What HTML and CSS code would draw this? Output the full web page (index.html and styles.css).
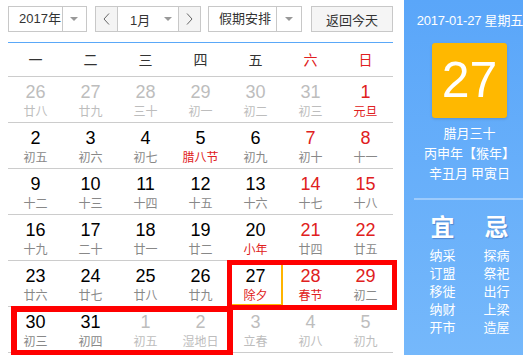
FILE: index.html
```html
<!DOCTYPE html>
<html lang="zh-CN">
<head>
  <meta charset="UTF-8">
  <title>万年历</title>
  <link rel="stylesheet" href="styles.css">
</head>
<body>
  <div class="page">
    <div class="main">
      <div class="toolbar">
        <div class="select select-year">
          <span class="select-text">2017年</span>
          <span class="select-arrow"><i class="caret"></i></span>
        </div>
        <div class="month-group">
          <span class="month-btn">
            <svg width="7" height="12" viewBox="0 0 7 12"><polyline points="6,0.5 1,6 6,11.5" fill="none" stroke="#666" stroke-width="1"/></svg>
          </span>
          <span class="month-select"><span class="month-text">1月</span><i class="caret"></i></span>
          <span class="month-btn">
            <svg width="7" height="12" viewBox="0 0 7 12"><polyline points="1,0.5 6,6 1,11.5" fill="none" stroke="#666" stroke-width="1"/></svg>
          </span>
        </div>
        <div class="select select-holiday">
          <span class="select-text">假期安排</span>
          <span class="select-arrow"><i class="caret"></i></span>
        </div>
        <button class="today-btn">返回今天</button>
      </div>

      <div class="weekdays">
        <span>一</span><span>二</span><span>三</span><span>四</span><span>五</span>
        <span class="red">六</span><span class="red">日</span>
      </div>

      <div class="days">
        <div class="day other"><b>26</b><em>廿八</em></div>
        <div class="day other"><b>27</b><em>廿九</em></div>
        <div class="day other"><b>28</b><em>三十</em></div>
        <div class="day other"><b>29</b><em>初一</em></div>
        <div class="day other"><b>30</b><em>初二</em></div>
        <div class="day other"><b>31</b><em>初三</em></div>
        <div class="day weekend"><b>1</b><em class="festival">元旦</em></div>

        <div class="day"><b>2</b><em>初五</em></div>
        <div class="day"><b>3</b><em>初六</em></div>
        <div class="day"><b>4</b><em>初七</em></div>
        <div class="day"><b>5</b><em class="festival">腊八节</em></div>
        <div class="day"><b>6</b><em>初九</em></div>
        <div class="day weekend"><b>7</b><em>初十</em></div>
        <div class="day weekend"><b>8</b><em>十一</em></div>

        <div class="day"><b>9</b><em>十二</em></div>
        <div class="day"><b>10</b><em>十三</em></div>
        <div class="day"><b>11</b><em>十四</em></div>
        <div class="day"><b>12</b><em>十五</em></div>
        <div class="day"><b>13</b><em>十六</em></div>
        <div class="day weekend"><b>14</b><em>十七</em></div>
        <div class="day weekend"><b>15</b><em>十八</em></div>

        <div class="day"><b>16</b><em>十九</em></div>
        <div class="day"><b>17</b><em>二十</em></div>
        <div class="day"><b>18</b><em>廿一</em></div>
        <div class="day"><b>19</b><em>廿二</em></div>
        <div class="day"><b>20</b><em class="festival">小年</em></div>
        <div class="day weekend"><b>21</b><em>廿四</em></div>
        <div class="day weekend"><b>22</b><em>廿五</em></div>

        <div class="day"><b>23</b><em>廿六</em></div>
        <div class="day"><b>24</b><em>廿七</em></div>
        <div class="day"><b>25</b><em>廿八</em></div>
        <div class="day"><b>26</b><em>廿九</em></div>
        <div class="day selected"><b>27</b><em class="festival">除夕</em></div>
        <div class="day weekend"><b>28</b><em class="festival">春节</em></div>
        <div class="day weekend"><b>29</b><em>初二</em></div>

        <div class="day"><b>30</b><em>初三</em></div>
        <div class="day"><b>31</b><em>初四</em></div>
        <div class="day other"><b>1</b><em>初五</em></div>
        <div class="day other"><b>2</b><em>湿地日</em></div>
        <div class="day other"><b>3</b><em>立春</em></div>
        <div class="day other"><b>4</b><em>初八</em></div>
        <div class="day other"><b>5</b><em>初九</em></div>
      </div>
    </div>

    <div class="side">
      <div class="side-inner">
        <div class="side-date">2017-01-27 星期五</div>
        <div class="big-day">27</div>
        <div class="lunar-info">
          <div>腊月三十</div>
          <div>丙申年【猴年】</div>
          <div>辛丑月 甲寅日</div>
        </div>
        <div class="side-line"></div>
        <div class="almanac">
          <div class="almanac-col">
            <div class="almanac-title">宜</div>
            <div>纳采</div><div>订盟</div><div>移徙</div><div>纳财</div><div>开市</div>
          </div>
          <div class="almanac-col">
            <div class="almanac-title">忌</div>
            <div>探病</div><div>祭祀</div><div>出行</div><div>上梁</div><div>造屋</div>
          </div>
        </div>
      </div>
    </div>

    <!-- red marks drawn over the calendar -->
    <div class="mark mark-week"></div>
    <div class="mark mark-next"></div>
  </div>
</body>
</html>
```

FILE: styles.css
```css
html, body {
  margin: 0;
  padding: 0;
  overflow: hidden;
}

body {
  font-family: "Liberation Sans", "Noto Sans CJK SC", sans-serif;
  background: #ffffff;
  color: #333;
}

.page {
  position: relative;
  display: flex;
  height: 355px;
  width: 523px;
}

.main {
  width: 385px;
  margin-left: 8px;
}

.toolbar {
  display: flex;
  align-items: flex-start;
  padding: 6px 0 10px;
  border-bottom: 1px solid #5aa8f8;
  font-size: 13px;
}

.select {
  display: flex;
  height: 24px;
  border: 1px solid #c8c8c8;
  background: #fff;
}

.select-text {
  line-height: 24px;
  padding-left: 10px;
}

.select-arrow {
  display: flex;
  align-items: center;
  justify-content: center;
  width: 24px;
  border-left: 1px solid #c8c8c8;
}

.caret {
  display: block;
  width: 0;
  height: 0;
  border-left: 4px solid transparent;
  border-right: 4px solid transparent;
  border-top: 4px solid #999;
}

.select-year {
  width: 77px;
}

.select-year .select-text {
  width: 44px;
}

.month-group {
  display: flex;
  height: 24px;
  margin-left: 8px;
  border: 1px solid #c8c8c8;
}

.month-btn {
  display: flex;
  align-items: center;
  justify-content: center;
  width: 21px;
  background: #f4f4f4;
}

.month-select {
  display: flex;
  align-items: center;
  width: 60px;
  border-left: 1px solid #c8c8c8;
  border-right: 1px solid #c8c8c8;
  background: #fff;
}

.month-text {
  margin-left: 12px;
  width: 34px;
}

.select-holiday {
  width: 92px;
  margin-left: 7px;
}

.select-holiday .select-text {
  width: 57px;
}

.today-btn {
  margin-left: 9px;
  width: 82px;
  height: 26px;
  padding: 0;
  border: 1px solid #c8c8c8;
  background: #f5f5f5;
  color: #333;
  font-family: inherit;
  font-size: 13px;
}

.weekdays {
  display: grid;
  grid-template-columns: repeat(7, 55px);
  height: 33px;
  border-bottom: 1px solid #cccccc;
  font-size: 14px;
  line-height: 33px;
  text-align: center;
  font-family: "Noto Sans CJK SC", sans-serif;
}

.red {
  color: #e02020;
}

.days {
  display: grid;
  grid-template-columns: repeat(7, 55px);
}

.day {
  height: 45px;
  border-bottom: 1px solid #cccccc;
  text-align: center;
  box-sizing: content-box;
}

.day b {
  display: block;
  margin-top: 5px;
  font-weight: normal;
  font-size: 18px;
  line-height: 20px;
  color: #000;
}

.day em {
  display: block;
  font-style: normal;
  font-size: 12px;
  line-height: 18px;
  color: #888;
  font-family: "Noto Sans CJK SC", sans-serif;
}

.day.weekend b {
  color: #e02020;
}

.day em.festival {
  color: #e02020;
}

.day.other b,
.day.other em {
  color: #bdbdbd;
}

.day.selected {
  box-shadow: inset -2px -2px 0 #ffb400, inset 2px 2px 0 #ffb400;
}

.side {
  margin-left: 11px;
  width: 119px;
  overflow: hidden;
  background: linear-gradient(#5aa6f9, #75b8fb);
  color: #fff;
}

.side-inner {
  width: 131px;
  text-align: center;
  font-family: "Liberation Sans", "Noto Sans CJK SC", sans-serif;
}

.side-date {
  margin-top: 12px;
  padding-right: 12px;
  font-size: 13px;
  line-height: 17px;
  letter-spacing: -0.2px;
  white-space: nowrap;
  text-align: right;
}

.big-day {
  width: 75px;
  height: 75px;
  margin: 14px auto 0;
  background: #ffb800;
  border-radius: 3px;
  box-shadow: 0 1px 3px rgba(0,0,0,0.15);
  font-size: 50px;
  line-height: 75px;
}

.lunar-info {
  margin-top: 5px;
  font-size: 13px;
  line-height: 20px;
  font-family: "Noto Sans CJK SC", sans-serif;
}

.side-line {
  height: 2px;
  margin: 15px 10px 0;
  background: rgba(255,255,255,0.35);
}

.almanac {
  display: flex;
  justify-content: center;
  margin-top: 11px;
  font-size: 13px;
  line-height: 18px;
  font-family: "Noto Sans CJK SC", sans-serif;
}

.almanac-col {
  width: 54px;
}

.almanac-title {
  font-size: 24px;
  line-height: 30px;
  margin-bottom: 5px;
  font-weight: bold;
  text-shadow: 1px 1px 1px rgba(0,0,80,0.25);
}

.mark {
  position: absolute;
  border: 5px solid #ff0000;
  box-sizing: border-box;
}

.mark-week {
  left: 227px;
  top: 260px;
  width: 170px;
  height: 50px;
}

.mark-next {
  left: 11px;
  top: 306px;
  width: 222px;
  height: 50px;
  border-width: 6px;
}
```
